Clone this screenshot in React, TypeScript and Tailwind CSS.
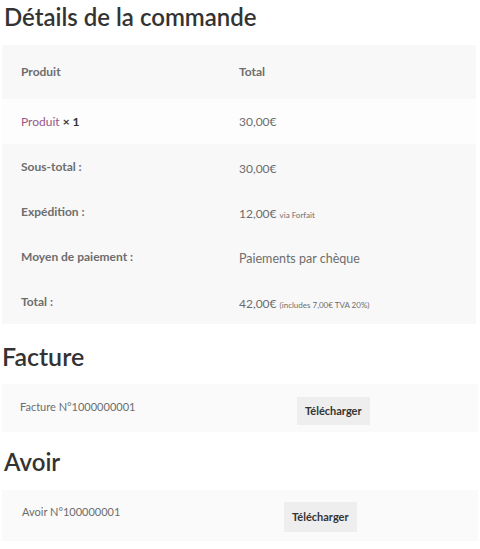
import React from 'react';

const FONT = { fontFamily: 'Lato, "Noto Sans", sans-serif' };

const totals: { label: string; value: React.ReactNode }[] = [
  { label: 'Sous-total :', value: <span className="text-[12px]">30,00€</span> },
  {
    label: 'Expédition :',
    value: (
      <span className="text-[12px]">
        12,00€ <small className="text-[8px]">via Forfait</small>
      </span>
    ),
  },
  { label: 'Moyen de paiement :', value: <span className="text-[12.5px]">Paiements par chèque</span> },
  {
    label: 'Total :',
    value: (
      <span className="text-[12px]">
        42,00€ <small className="text-[8px]">(includes 7,00€ TVA 20%)</small>
      </span>
    ),
  },
];

function DocRow({ label, textPad, colWidth, tall }: { label: string; textPad: string; colWidth: string; tall?: boolean }) {
  return (
    <div className={`mx-[2px] flex items-start bg-[#fafafa] ${tall ? 'h-[51px] pt-[12px]' : 'h-[48px] pt-[13px]'}`}>
      <div className={`${textPad} ${colWidth} pt-[2px] text-[11px] leading-[16px] text-[#6d6d6d]`}>{label}</div>
      <button
        className={`bg-[#eeeeee] px-[8px] text-[11px] font-bold text-[#333333] ${tall ? 'h-[30px]' : 'h-[28px]'}`}
        type="button"
      >
        Télécharger
      </button>
    </div>
  );
}

export default function App() {
  return (
    <div className="h-[549px] w-[480px] overflow-hidden bg-white" style={FONT}>
      <h2 className="pl-[4px] pt-[2px] text-[24px] font-semibold leading-[30px] text-[#333333]">Détails de la commande</h2>

      <div className="mx-[2px] mt-[13px] w-[474px] text-[#6d6d6d]">
        <div className="grid h-[54px] grid-cols-[237px_1fr] items-center bg-[#f8f8f8] text-[12px] font-bold">
          <div className="pl-[19px]">Produit</div>
          <div>Total</div>
        </div>
        <div className="grid h-[45px] grid-cols-[237px_1fr] items-center bg-[#fdfdfd] text-[12px]">
          <div className="pl-[19px]">
            <span className="text-[#96588a]">Produit</span> <strong className="text-[#333333]">× 1</strong>
          </div>
          <div>30,00€</div>
        </div>
        <div className="bg-[#f8f8f8]">
          {totals.map((row) => (
            <div key={row.label} className="grid h-[45px] grid-cols-[237px_1fr] items-center">
              <div className="pl-[19px] text-[12px] font-bold">{row.label}</div>
              <div>{row.value}</div>
            </div>
          ))}
        </div>
      </div>

      <h2 className="mt-[18px] pl-[2px] text-[25px] font-semibold leading-[28px] text-[#333333]">Facture</h2>
      <div className="mt-[14px]">
        <DocRow label="Facture N°1000000001" textPad="pl-[18px]" colWidth="w-[295px]" />
      </div>

      <h2 className="mt-[15px] pl-[4px] text-[24px] font-semibold leading-[30px] text-[#333333]">Avoir</h2>
      <div className="mt-[13px]">
        <DocRow label="Avoir N°100000001" textPad="pl-[20px]" colWidth="w-[282px]" tall />
      </div>
    </div>
  );
}
